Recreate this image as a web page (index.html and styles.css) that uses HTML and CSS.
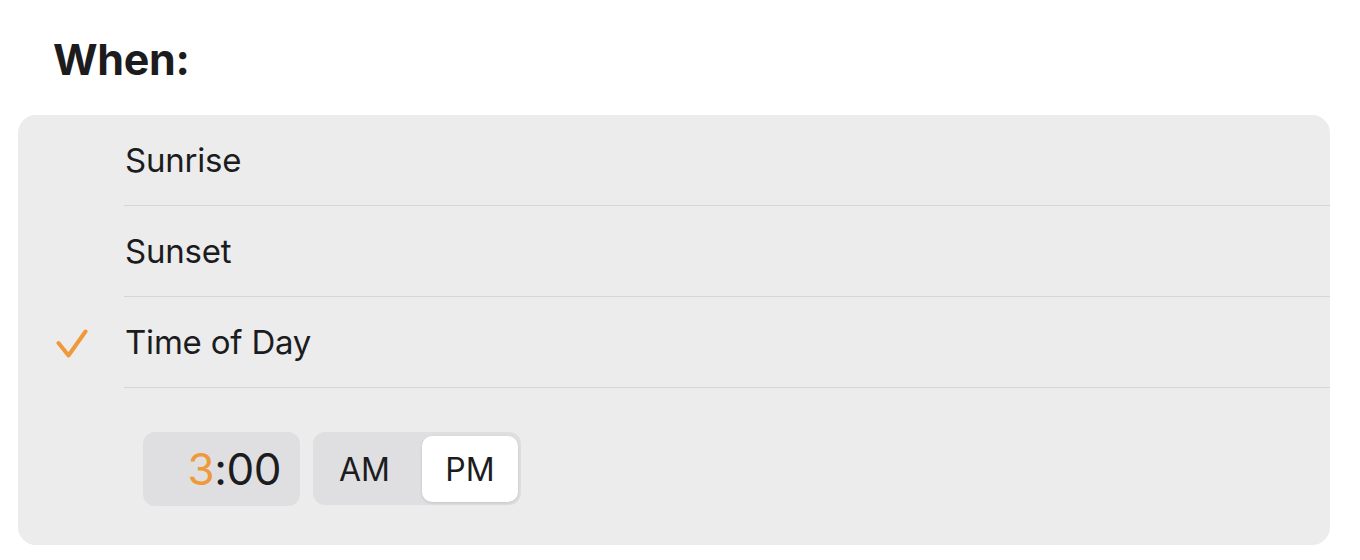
FILE: index.html
```html
<!DOCTYPE html>
<html>
<head>
<meta charset="utf-8">
<link rel="stylesheet" href="styles.css">
</head>
<body>
<div class="page">
  <h1 class="title">When:</h1>
  <div class="card">
    <div class="row">
      <div class="mark"></div>
      <div class="label">Sunrise</div>
    </div>
    <div class="row">
      <div class="mark"></div>
      <div class="label">Sunset</div>
    </div>
    <div class="row">
      <div class="mark">
        <svg width="32" height="30" viewBox="0 0 32 30"><path d="M2.5 14 L12.5 26.5 L29.5 2.5" fill="none" stroke="#f0993a" stroke-width="4" stroke-linecap="round" stroke-linejoin="round"/></svg>
      </div>
      <div class="label">Time of Day</div>
    </div>
    <div class="controls">
      <div class="timebox"><span class="hour">3</span>:00</div>
      <div class="segment">
        <div class="seg seg-off">AM</div>
        <div class="seg seg-on">PM</div>
      </div>
    </div>
  </div>
</div>
</body>
</html>
```
FILE: styles.css
```css
html, body {
  margin: 0;
  padding: 0;
  background: #ffffff;
}
body {
  font-family: Inter, "Liberation Sans", Arial, sans-serif;
  color: #1c1c1e;
}
.page {
  width: 1360px;
  height: 560px;
  overflow: hidden;
}
.title {
  margin: 0;
  padding: 37px 0 0 53px;
  height: 115px;
  box-sizing: border-box;
  font-size: 43px;
  line-height: 44px;
  font-weight: 700;
  letter-spacing: -0.3px;
}
.card {
  margin-left: 18px;
  width: 1312px;
  height: 430px;
  background: #ececec;
  border-radius: 18px;
  display: flex;
  flex-direction: column;
}
.row {
  display: flex;
  height: 91px;
  flex: none;
}
.mark {
  width: 106px;
  flex: none;
  display: flex;
  align-items: center;
  justify-content: flex-end;
  padding-right: 36px;
  box-sizing: border-box;
  padding-top: 2px;
}
.label {
  flex: 1;
  display: flex;
  align-items: center;
  border-bottom: 1px solid #d6d6d8;
  font-size: 33px;
  letter-spacing: -0.2px;
  padding-left: 1px;
  padding-bottom: 1px;
}
.controls {
  display: flex;
  gap: 13px;
  padding: 44px 0 0 125px;
}
.timebox {
  width: 157px;
  height: 74px;
  box-sizing: border-box;
  background: #dfdfe1;
  border-radius: 12px;
  display: flex;
  align-items: center;
  justify-content: flex-end;
  padding-right: 19px;
  font-size: 44px;
  letter-spacing: -0.5px;
}
.hour {
  color: #f0993a;
}
.segment {
  width: 208px;
  height: 73px;
  box-sizing: border-box;
  background: #dfdfe1;
  border-radius: 12px;
  padding: 4px 3px 3px 4px;
  display: flex;
}
.seg {
  flex: 1;
  display: flex;
  align-items: center;
  justify-content: center;
  font-size: 32px;
  border-radius: 10px;
}
.seg-off {
  padding-right: 10px;
}
.seg-on {
  flex: none;
  width: 96px;
  background: #ffffff;
  box-shadow: 0 1px 3px rgba(0,0,0,0.12);
}
```
